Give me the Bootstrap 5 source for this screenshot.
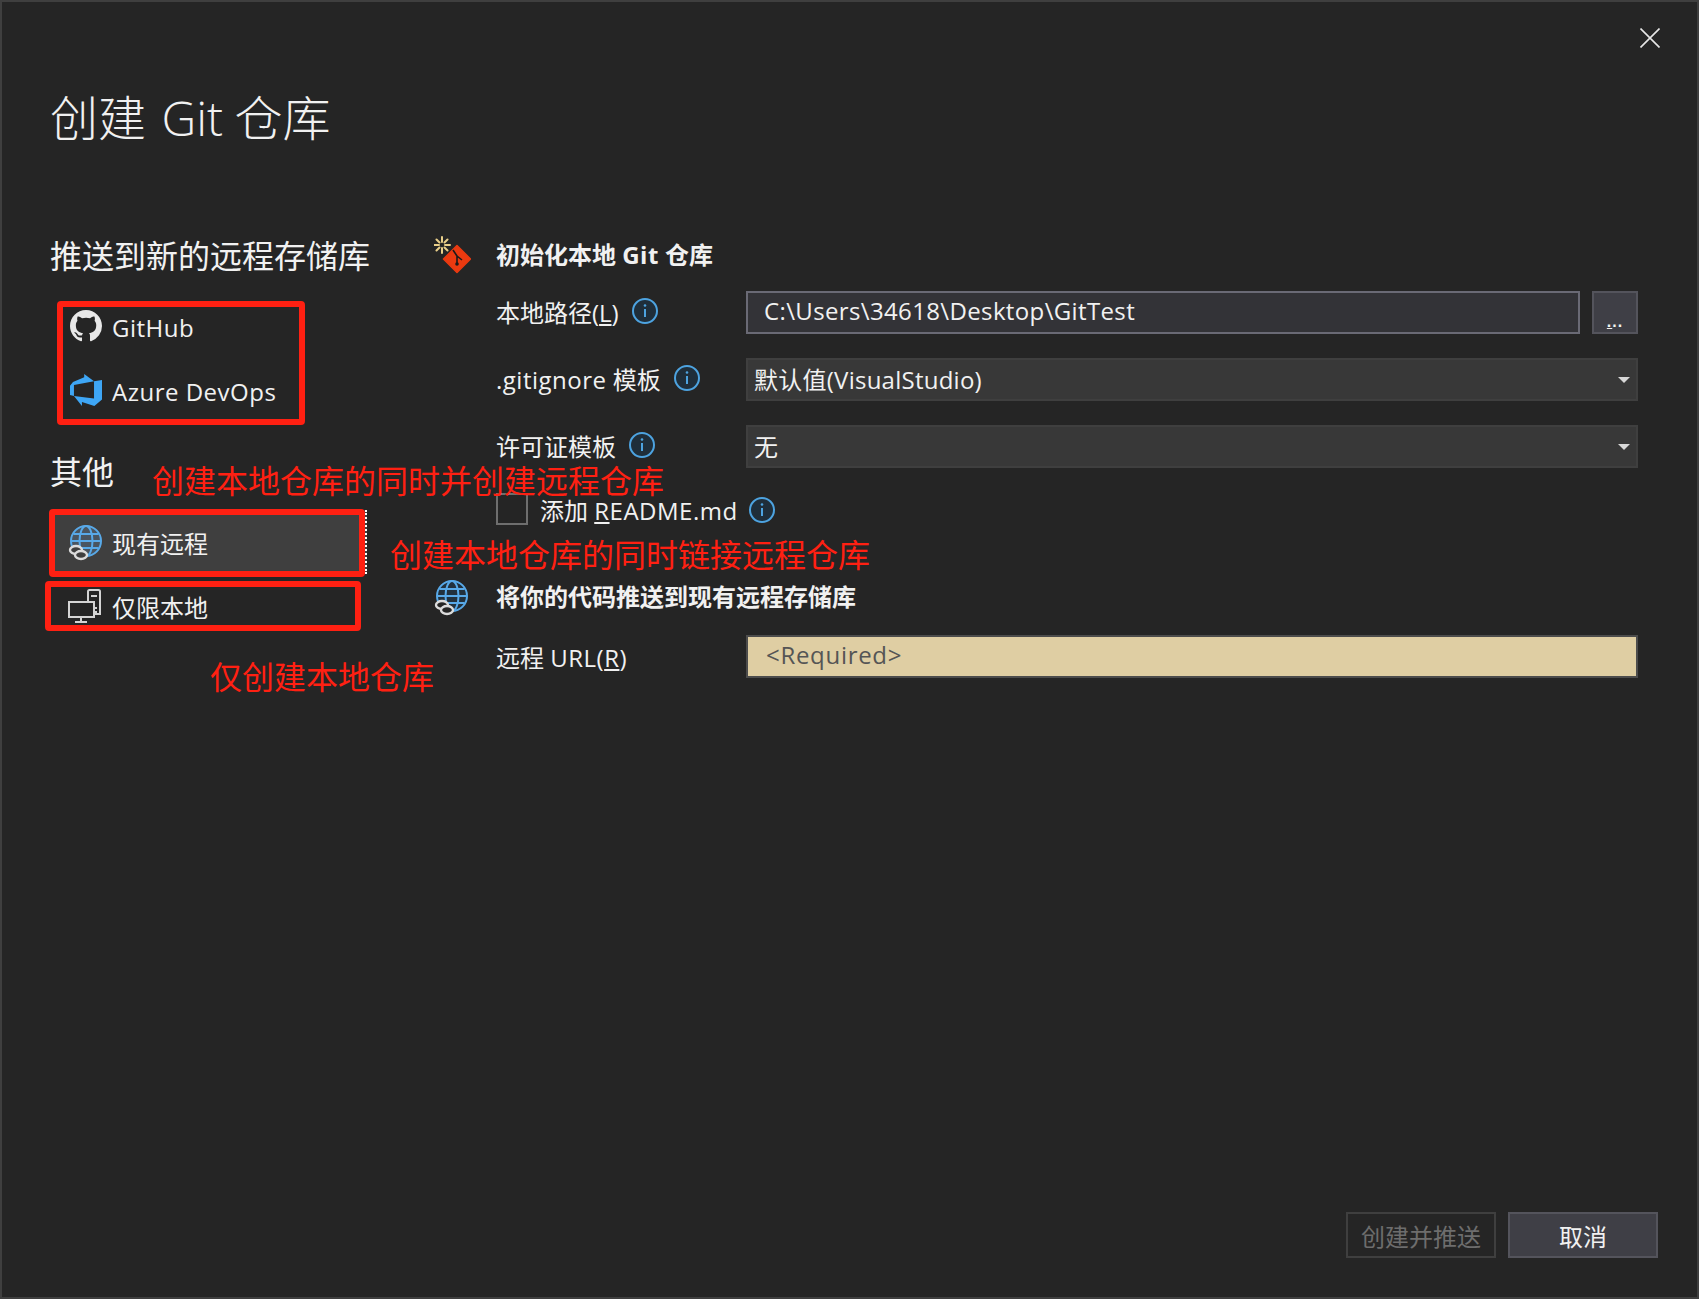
<!DOCTYPE html>
<html lang="zh-CN">
<head>
<meta charset="utf-8">
<title>创建 Git 仓库</title>
<link rel="stylesheet" href="https://cdn.jsdelivr.net/npm/bootstrap@5.3.0/dist/css/bootstrap.min.css">
<style>
html,body{height:100%;margin:0;background:#252525;overflow:hidden}
body{font-family:"Open Sans","Noto Sans CJK SC",sans-serif;font-size:24px;color:#f1f1f1;line-height:1.3}
.win{position:relative;height:1299px;border:2px solid #3f3f3f;background:#252525}
.top-close{height:70px;padding:26px 37px 0 0}
.dlg-title{margin:0 0 0 48px;height:160px;padding-top:13px;font-size:48px;font-weight:300;line-height:66px;color:#f1f1f1;word-spacing:3px}
.dlg-title span{margin-right:-4px}
.left-col{width:432px;flex:none;padding-left:48px}
.sec-title{font-size:32px;font-weight:400;line-height:48px;margin:0;color:#f1f1f1}
.sec-up{position:relative;top:-1px}
.nav-item-row{height:64px;width:317px;padding-left:18px;gap:10px;color:#f1f1f1;border-right:2px solid transparent}
.nav-item-row>span{padding-top:4px}
.nav-item-row.sel{background:#3f3f3f;border-right:2px dotted #fff}
.globe{margin-top:2px}
.lat{letter-spacing:.5px}
.right-col{margin-right:59px}
.sec-head{height:46px;font-size:24px;font-weight:700;color:#f1f1f1}
.gut{width:62px;flex:none}
.field{padding-left:62px;height:43px}
.fld-label{width:250px;flex:none;gap:13px;color:#f1f1f1}
.fld-label svg{margin-top:-4px}
.fld-label.low{padding-top:2px}
.fld-input.form-control,.fld-input.form-select{height:43px;border-radius:0;font-size:24px;line-height:1.2;color:#f1f1f1;font-family:inherit;box-shadow:none}
.fld-input.form-control{background:#333337;border:2px solid #6a6a75;padding:0 16px 4px;letter-spacing:.36px}
.fld-input.form-select{border:2px solid #3f3f3f;background-color:#383838;padding:2px 40px 0 6px;letter-spacing:.25px;background-size:12px 6px;background-position:right 6px center;background-image:url("data:image/svg+xml,%3Csvg xmlns='http://www.w3.org/2000/svg' viewBox='0 0 12 6'%3E%3Cpath d='M0 0h12L6 6z' fill='%23d8d8d8'/%3E%3C/svg%3E")}
.fld-input.form-control.req{background:#dfcea3;border-color:#4c4c4c;color:#555;padding-left:18px;letter-spacing:.7px}
.dots-btn.btn{width:46px;height:43px;flex:none;margin-left:12px;padding:0 0 2px 0;border:2px solid #54545c;border-radius:0;background:#3f3f46;color:#f1f1f1;font-size:16px;line-height:1;font-family:"Liberation Sans",sans-serif;font-weight:700;letter-spacing:1px;display:flex;align-items:flex-end;justify-content:center}
.chk.form-check-input{width:32px;height:32px;margin:0;border:2px solid #6e6e6e;border-radius:0;background-color:transparent;flex:none}
.chk-text{margin-left:12px;padding-top:4px}
.chk-info{margin-left:11px;margin-top:1px}
.foot-btn.btn{width:150px;height:46px;padding:4px 0 0;border-radius:0;font-size:24px;line-height:1;font-family:inherit;border:2px solid #54545c;background:#3f3f46;color:#f1f1f1}
.foot-btn.btn:disabled{opacity:1;background:transparent;border-color:#3f3f3f;color:#6d6d6d}
.foot{position:absolute;right:39px;bottom:39px;gap:12px}
.red-box{position:absolute;border:6px solid #ff2012;border-radius:4px;pointer-events:none}
.note{position:absolute;color:#ff2012;font-size:32px;line-height:40px;white-space:nowrap;font-family:"Noto Sans CJK SC",sans-serif}
.b1{left:55px;top:299px;width:248px;height:124px}
.b2{left:47px;top:507px;width:316px;height:68px}
.b3{left:43px;top:579px;width:316px;height:50px}
.n1{left:150px;top:457px}
.n2{left:388px;top:531px}
.n3{left:208px;top:653px}
</style>
</head>
<body>
<div class="win">
  <div class="top-close d-flex justify-content-end">
    <svg width="20" height="20" viewBox="0 0 20 20" fill="none" stroke="#e6e6e6" stroke-width="1.6"><path d="M.5.5l19 19M19.5.5l-19 19"/></svg>
  </div>
  <h1 class="dlg-title">创建 <span>Git</span> 仓库</h1>

  <div class="d-flex">
    <aside class="left-col">
      <h2 class="sec-title">推送到新的远程存储库</h2>
      <div style="height:14px"></div>
      <div class="nav-item-row d-flex align-items-center">
        <svg width="34" height="32" viewBox="-1 0 17 16" fill="#e8e8e8"><path d="M8 0C3.58 0 0 3.58 0 8c0 3.54 2.29 6.53 5.47 7.59.4.07.55-.17.55-.38 0-.19-.01-.82-.01-1.49-2.01.37-2.53-.49-2.69-.94-.09-.23-.48-.94-.82-1.13-.28-.15-.68-.52-.01-.53.63-.01 1.08.58 1.23.82.72 1.21 1.87.87 2.33.66.07-.52.28-.87.51-1.07-1.78-.2-3.64-.89-3.64-3.95 0-.87.31-1.59.82-2.15-.08-.2-.36-1.02.08-2.12 0 0 .67-.21 2.2.82.64-.18 1.32-.27 2-.27.68 0 1.36.09 2 .27 1.53-1.04 2.2-.82 2.2-.82.44 1.1.16 1.92.08 2.12.51.56.82 1.27.82 2.15 0 3.07-1.87 3.75-3.65 3.95.29.25.54.73.54 1.48 0 1.07-.01 1.93-.01 2.2 0 .21.15.46.55.38A8.012 8.012 0 0 0 16 8c0-4.42-3.58-8-8-8z"/></svg>
        <span class="lat">GitHub</span>
      </div>
      <div class="nav-item-row d-flex align-items-center">
        <svg width="34" height="32" viewBox="-1.5 0 25.5 24" fill="#3ea6f5"><path d="M0 8.877L2.247 5.91l8.405-3.416V.022l7.37 5.393L2.966 8.338v8.225L0 15.707zm24-4.45v14.651l-5.753 4.9-9.303-3.057v3.056l-5.978-7.416 15.057 1.798V5.415z"/></svg>
        <span class="lat">Azure DevOps</span>
      </div>
      <div style="height:27px"></div>
      <h2 class="sec-title sec-up">其他</h2>
      <div style="height:13px"></div>
      <div class="nav-item-row sel d-flex align-items-center">
        <svg class="globe" width="34" height="36" viewBox="0 0 34 36" fill="none"><circle cx="18" cy="16" r="15" stroke="#58a9e8" stroke-width="2" fill="#4a5560"/><ellipse cx="18" cy="16" rx="6.5" ry="15" stroke="#58a9e8" stroke-width="2"/><path d="M5.500 9h25M5.500 23h25M3 16h30" stroke="#58a9e8" stroke-width="2"/><ellipse cx="8" cy="25" rx="6" ry="4" stroke="#dcdcdc" stroke-width="2.400" fill="#3f3f3f"/><ellipse cx="13" cy="30" rx="6" ry="4" stroke="#dcdcdc" stroke-width="2.400" fill="#3f3f3f"/></svg>
        <span>现有远程</span>
      </div>
      <div class="nav-item-row d-flex align-items-center">
        <svg width="34" height="34" viewBox="0 0 34 34" fill="none" stroke="#d4d4d4" stroke-width="2"><path d="M20 13V2.500c0-.8.6-1.500 1.500-1.500h9c.8 0 1.500.6 1.500 1.500V25h-5"/><path d="M23 7h6M27 19h2M27 23h2"/><rect x="1" y="13" width="25" height="15"/><path d="M13 28v5M7 33h12"/></svg>
        <span>仅限本地</span>
      </div>
    </aside>

    <main class="right-col flex-grow-1">
      <div class="sec-head d-flex align-items-center">
        <div class="gut">
          <svg width="37" height="38" viewBox="0 0 37 38"><g stroke="#e9cf8a" stroke-width="2" stroke-linecap="round"><path d="M8 1v5M8 12v5M0 9h5M11 9h5M2.500 3.500L5.500 6.500M10.500 11.500l3 3M13.500 3.500l-3 3M5.500 11.500l-3 3"/></g><path d="M23 9.500L36.500 23 23 36.500 9.500 23z" fill="#ea3a10" stroke="#ea3a10" stroke-width="1.500" stroke-linejoin="round"/><path d="M19 14l4 6v8M23 20l5 4" stroke="#1a1a1a" stroke-width="1.600" fill="none"/><circle cx="23" cy="28" r="1.800" fill="#1a1a1a"/></svg>
        </div>
        <span>初始化本地 <span class="lat">Git</span> 仓库</span>
      </div>
      <div style="height:13px"></div>
      <div class="field d-flex align-items-center">
        <label class="fld-label d-flex align-items-center"><span>本地路径(<u>L</u>)</span>
          <svg width="26" height="26" viewBox="0 0 26 26"><circle cx="13" cy="13" r="12" stroke="#4da3e0" stroke-width="2" fill="#1f2e3a"/><path d="M13 11v8" stroke="#4da3e0" stroke-width="2"/><circle cx="13" cy="7.500" r="1.300" fill="#4da3e0"/></svg></label>
        <input class="form-control fld-input flex-grow-1" value="C:\Users\34618\Desktop\GitTest">
        <button class="btn dots-btn" type="button"><u>.</u>..</button>
      </div>
      <div style="height:24px"></div>
      <div class="field d-flex align-items-center">
        <label class="fld-label d-flex align-items-center"><span><span class="lat">.gitignore</span> 模板</span>
          <svg width="26" height="26" viewBox="0 0 26 26"><circle cx="13" cy="13" r="12" stroke="#4da3e0" stroke-width="2" fill="#1f2e3a"/><path d="M13 11v8" stroke="#4da3e0" stroke-width="2"/><circle cx="13" cy="7.500" r="1.300" fill="#4da3e0"/></svg></label>
        <select class="form-select fld-input flex-grow-1"><option>默认值(VisualStudio)</option></select>
      </div>
      <div style="height:24px"></div>
      <div class="field d-flex align-items-center">
        <label class="fld-label d-flex align-items-center"><span>许可证模板</span>
          <svg width="26" height="26" viewBox="0 0 26 26"><circle cx="13" cy="13" r="12" stroke="#4da3e0" stroke-width="2" fill="#1f2e3a"/><path d="M13 11v8" stroke="#4da3e0" stroke-width="2"/><circle cx="13" cy="7.500" r="1.300" fill="#4da3e0"/></svg></label>
        <select class="form-select fld-input flex-grow-1"><option>无</option></select>
      </div>
      <div style="height:25px"></div>
      <div class="field d-flex align-items-center" style="height:32px">
        <input class="form-check-input chk" type="checkbox">
        <span class="chk-text">添加 <span class="lat"><u>R</u>EADME.md</span></span>
        <svg class="chk-info" width="26" height="26" viewBox="0 0 26 26"><circle cx="13" cy="13" r="12" stroke="#4da3e0" stroke-width="2" fill="#1f2e3a"/><path d="M13 11v8" stroke="#4da3e0" stroke-width="2"/><circle cx="13" cy="7.500" r="1.300" fill="#4da3e0"/></svg>
      </div>
      <div style="height:49px"></div>
      <div class="sec-head d-flex align-items-center">
        <div class="gut">
          <svg class="globe" width="34" height="36" viewBox="0 0 34 36" fill="none"><circle cx="18" cy="16" r="15" stroke="#58a9e8" stroke-width="2" fill="#22313d"/><ellipse cx="18" cy="16" rx="6.500" ry="15" stroke="#58a9e8" stroke-width="2"/><path d="M5.500 9h25M5.500 23h25M3 16h30" stroke="#58a9e8" stroke-width="2"/><ellipse cx="8" cy="25" rx="6" ry="4" stroke="#dcdcdc" stroke-width="2.400" fill="#252525"/><ellipse cx="13" cy="30" rx="6" ry="4" stroke="#dcdcdc" stroke-width="2.400" fill="#252525"/></svg>
        </div>
        <span>将你的代码推送到现有远程存储库</span>
      </div>
      <div style="height:15px"></div>
      <div class="field d-flex align-items-center">
        <label class="fld-label low d-flex align-items-center"><span>远程 <span class="lat">URL(<u>R</u>)</span></span></label>
        <input class="form-control fld-input req flex-grow-1" value="<Required>">
      </div>
    </main>
  </div>

  <div class="foot d-flex">
    <button class="btn foot-btn" type="button" disabled>创建并推送</button>
    <button class="btn foot-btn" type="button">取消</button>
  </div>

  <div class="red-box b1"></div>
  <div class="red-box b2"></div>
  <div class="red-box b3"></div>
  <div class="note n1">创建本地仓库的同时并创建远程仓库</div>
  <div class="note n2">创建本地仓库的同时链接远程仓库</div>
  <div class="note n3">仅创建本地仓库</div>
</div>
<script src="https://cdn.jsdelivr.net/npm/bootstrap@5.3.0/dist/js/bootstrap.bundle.min.js"></script>
</body>
</html>
